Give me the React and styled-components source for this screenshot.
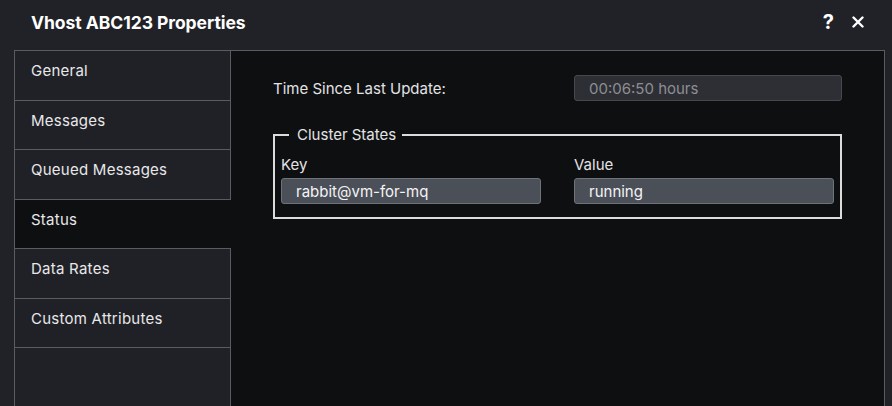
import React from "react";
import styled, { createGlobalStyle } from "styled-components";

const Global = createGlobalStyle`
  html, body { margin: 0; padding: 0; background: #212227; }
  body { font-family: Inter, "Noto Sans", sans-serif; color: #e6e6e8; }
  * { box-sizing: border-box; }
`;

const Dialog = styled.div`
  width: 892px;
  height: 406px;
  background: #212227;
  display: flex;
  flex-direction: column;
  overflow: hidden;
`;

const Header = styled.div`
  height: 50px;
  flex: none;
  display: flex;
  align-items: center;
  justify-content: space-between;
  padding: 0 28px 6px 31px;
`;

const Title = styled.h1`
  margin: 0;
  font-size: 17.5px;
  font-weight: 700;
  color: #ffffff;
  letter-spacing: -0.05px;
`;

const HeaderActions = styled.div`
  display: flex;
  align-items: center;
  gap: 18px;
`;

const IconButton = styled.button`
  background: none;
  border: none;
  padding: 0;
  margin: 0;
  color: #ffffff;
  font-family: Inter, sans-serif;
  font-weight: 700;
  font-size: 20px;
  line-height: 1;
  display: flex;
  align-items: center;
  cursor: pointer;
`;

const Body = styled.div`
  flex: 1;
  margin: 0 7px 0 14px;
  border: 1px solid #5b5c61;
  border-bottom: none;
  display: flex;
  min-height: 0;
`;

const Sidebar = styled.nav`
  width: 216px;
  flex: none;
  display: flex;
  flex-direction: column;
`;

const Tab = styled.div`
  height: 49.5px;
  flex: none;
  display: flex;
  align-items: flex-start;
  padding: 10px 0 0 16px;
  font-size: 15px;
  letter-spacing: 0.25px;
  color: #e8e8ea;
  background: ${(p) => (p.$active ? "#0e0f11" : "#202126")};
  border-bottom: 1px solid #5b5c61;
  border-right: ${(p) => (p.$active ? "none" : "1px solid #5b5c61")};
`;

const SidebarFill = styled.div`
  flex: 1;
  background: #202126;
  border-right: 1px solid #5b5c61;
`;

const Panel = styled.main`
  flex: 1;
  background: #0e0f11;
  padding: 24px 41px 0 42px;
  display: flex;
  flex-direction: column;
`;

const FieldRow = styled.div`
  display: grid;
  grid-template-columns: 301px 268px;
  align-items: center;
`;

const Label = styled.label`
  font-size: 15px;
  color: #e3e3e5;
`;

const Input = styled.div`
  height: 26px;
  flex: none;
  border-radius: 3px;
  padding: 0 14px;
  display: flex;
  align-items: center;
  font-size: 15px;
  background: ${(p) => (p.$disabled ? "#2d2f35" : "#4b4f58")};
  border: 1px solid ${(p) => (p.$disabled ? "#46484e" : "#6e727b")};
  color: ${(p) => (p.$disabled ? "#8d8e93" : "#f4f4f6")};
`;

const Fieldset = styled.fieldset`
  margin: 24px 0 0 0;
  width: 569px;
  border: 2px solid #dcdcdc;
  padding: 0 6px 13px 6px;
  display: grid;
  grid-template-columns: 260px 260px;
  column-gap: 33px;
`;

const Legend = styled.legend`
  margin-left: 8px;
  padding: 0 6px 0 8px;
  font-size: 15px;
  color: #e3e3e5;
`;

const Column = styled.div`
  display: flex;
  flex-direction: column;
  gap: 4px;
  margin-top: 11px;
`;

const CloseIcon = () => (
  <svg width="12" height="12" viewBox="0 0 12 12">
    <path d="M1.5 1.5 L10.5 10.5 M10.5 1.5 L1.5 10.5" stroke="#fff" strokeWidth="2.4" strokeLinecap="round" />
  </svg>
);

const tabs = ["General", "Messages", "Queued Messages", "Status", "Data Rates", "Custom Attributes"];

export default function App() {
  return (
    <Dialog>
      <Global />
      <Header>
        <Title>Vhost ABC123 Properties</Title>
        <HeaderActions>
          <IconButton>?</IconButton>
          <IconButton><CloseIcon /></IconButton>
        </HeaderActions>
      </Header>
      <Body>
        <Sidebar>
          {tabs.map((t) => (
            <Tab key={t} $active={t === "Status"}>{t}</Tab>
          ))}
          <SidebarFill />
        </Sidebar>
        <Panel>
          <FieldRow>
            <Label>Time Since Last Update:</Label>
            <Input $disabled>00:06:50 hours</Input>
          </FieldRow>
          <Fieldset>
            <Legend>Cluster States</Legend>
            <Column>
              <Label>Key</Label>
              <Input>rabbit@vm-for-mq</Input>
            </Column>
            <Column>
              <Label>Value</Label>
              <Input>running</Input>
            </Column>
          </Fieldset>
        </Panel>
      </Body>
    </Dialog>
  );
}
